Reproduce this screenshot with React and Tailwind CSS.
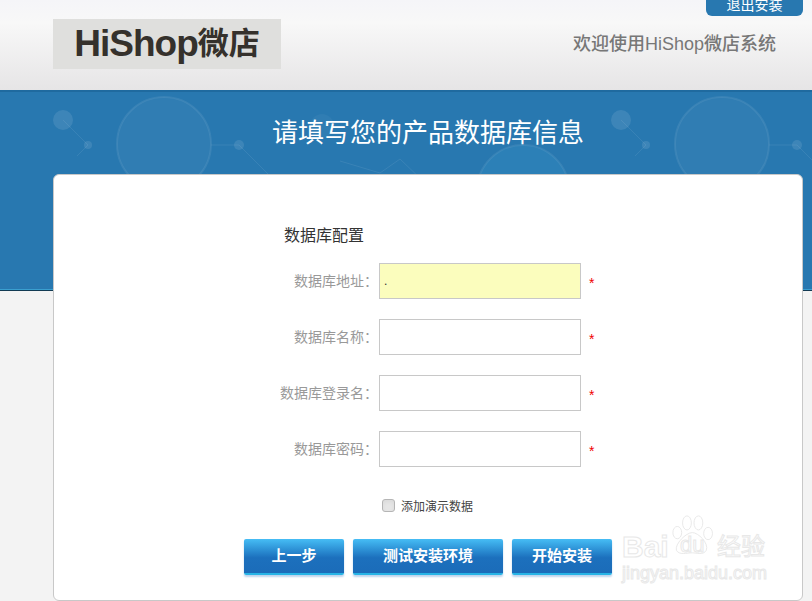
const fields = ['数据库地址：', '数据库名称：', '数据库登录名：', '数据库密码：']
const buttonClass = "h-[36px] rounded-[2px] bg-gradient-to-b from-[#46bdf5] via-[#1c70bd] via-55% to-[#1b6cb9] border-b-2 border-b-[#27b4e6] text-white text-[15px] font-bold shadow-[0_2px_2px_#bcd3ec]"

function Pattern({ x }) {
  return (
    <g transform={`translate(${x} 0)`} stroke="#ffffff" strokeOpacity="0.08" fill="none">
      <circle cx="164" cy="143" r="47" strokeWidth="2" fill="#ffffff" fillOpacity="0.04" />
      <circle cx="63" cy="119" r="10" stroke="none" fill="#ffffff" fillOpacity="0.1" />
      <circle cx="88" cy="144" r="4" stroke="none" fill="#ffffff" fillOpacity="0.1" />
      <circle cx="239" cy="144" r="5" stroke="none" fill="#ffffff" fillOpacity="0.1" />
      <path d="M63 119L88 144L77 155M211 144H239L282 187" />
      <circle cx="322" cy="125" r="12" stroke="none" fill="#ffffff" fillOpacity="0.04" />
      <path d="M340 160L380 172L400 158L425 182" />
      <circle cx="523" cy="190" r="46" strokeWidth="2" fill="#3aa0d8" fillOpacity="0.2" />
    </g>
  )
}

function App() {
  return (
    <div className="h-[601px] overflow-hidden bg-[#f3f3f3] font-['Liberation_Sans','Noto_Sans_CJK_SC',sans-serif]">
      <header className="h-[90px] bg-gradient-to-b from-[#f5f5f8] via-[#f8f8f8] via-25% to-[#e6e5e6] flex justify-between pl-[53px] pr-[9px]">
        <div className="mt-[19px] w-[228px] h-[50px] bg-[#dfdfdd] flex items-center justify-center text-[37px] font-bold tracking-[-1px] text-[#35312c]">
          HiShop<span className="text-[31px] tracking-normal">微店</span>
        </div>
        <div className="flex flex-col items-end">
          <button className="w-[97px] h-[16px] overflow-hidden pb-2 bg-[#2878b0] rounded-b-md text-white text-[14px] leading-[10px]">
            退出安装
          </button>
          <p className="mt-[16px] mr-[27px] text-[18px] leading-6 text-[#777777] font-medium">欢迎使用HiShop微店系统</p>
        </div>
      </header>

      <section className="relative h-[201px] bg-[#2878b0] border-t-2 border-t-[#1f6a9f] border-b border-b-[#123a52] shadow-[inset_0_-1px_0_#3a9fd0] overflow-hidden">
        <svg className="absolute inset-0" width="812" height="200" viewBox="0 91 812 200">
          <Pattern x={0} />
          <Pattern x={558} />
        </svg>
        <h1 className="relative pl-[44px] text-center text-[26px] leading-9 text-white pt-[23px]">请填写您的产品数据库信息</h1>
      </section>

      <main className="relative -mt-[117px] ml-[53px] w-[750px] h-[427px] bg-white border border-[#c8c8c8] rounded-md">
        <h2 className="ml-[230px] mt-[51px] text-[16px] leading-5 text-[#333333]">数据库配置</h2>
        <div className="mt-[17px] flex flex-col gap-5">
          {fields.map((label, i) => (
            <div key={label} className="flex items-center">
              <label className="w-[324px] pt-[1px] text-right text-[14px] text-[#999999]">{label}</label>
              <input
                type="text"
                readOnly
                value={i === 0 ? '.' : ''}
                className={`ml-[1px] w-[202px] h-[36px] border border-[#c8c8c8] px-1 text-[12px] text-[#333333] outline-none ${i === 0 ? 'bg-[#fbfdbd]' : 'bg-white'}`}
              />
              <span className="ml-[8px] mt-[3px] text-[14px] leading-none text-[#f00000]">*</span>
            </div>
          ))}
        </div>
        <div className="mt-[31px] ml-[328px] flex items-center h-[18px]">
          <span className="w-[13px] h-[13px] -mt-[3px] rounded-[3px] border border-[#b5b5b5] bg-[#e6e6e6] shadow-inner" />
          <span className="ml-[6px] text-[12px] text-[#444444]">添加演示数据</span>
        </div>
        <div className="mt-[23px] ml-[190px] flex gap-[9px]">
          <button className={`w-[100px] ${buttonClass}`}>上一步</button>
          <button className={`w-[150px] ${buttonClass}`}>测试安装环境</button>
          <button className={`w-[100px] ${buttonClass}`}>开始安装</button>
        </div>

        <div className="absolute left-[568px] top-[339px] w-[150px] h-[85px] text-transparent [-webkit-text-stroke:1px_#e8e8e8]">
          <svg className="absolute left-[50px] top-0" width="44" height="46" viewBox="0 0 50 50" fill="#ffffff" stroke="#e6e6e6">
            <ellipse cx="6" cy="20" rx="5" ry="7" />
            <ellipse cx="17" cy="9" rx="5" ry="8" />
            <ellipse cx="30" cy="9" rx="5" ry="8" />
            <ellipse cx="41" cy="21" rx="5" ry="7" />
            <path d="M23 20C30 20 42 32 39 40C36 46 28 43 23 43C17 43 8 46 5 40C3 33 16 20 23 20Z" />
          </svg>
          <span className="absolute left-0 top-[15px] text-[30px] leading-9 font-bold">Bai</span>
          <span className="absolute left-[58px] top-[19px] text-[22px] leading-6">du</span>
          <span className="absolute left-[95px] top-[19px] text-[24px] leading-7">经验</span>
          <span className="absolute left-0 top-[47px] text-[18px] leading-6 whitespace-nowrap">jingyan.baidu.com</span>
        </div>
      </main>
    </div>
  )
}

export default App
